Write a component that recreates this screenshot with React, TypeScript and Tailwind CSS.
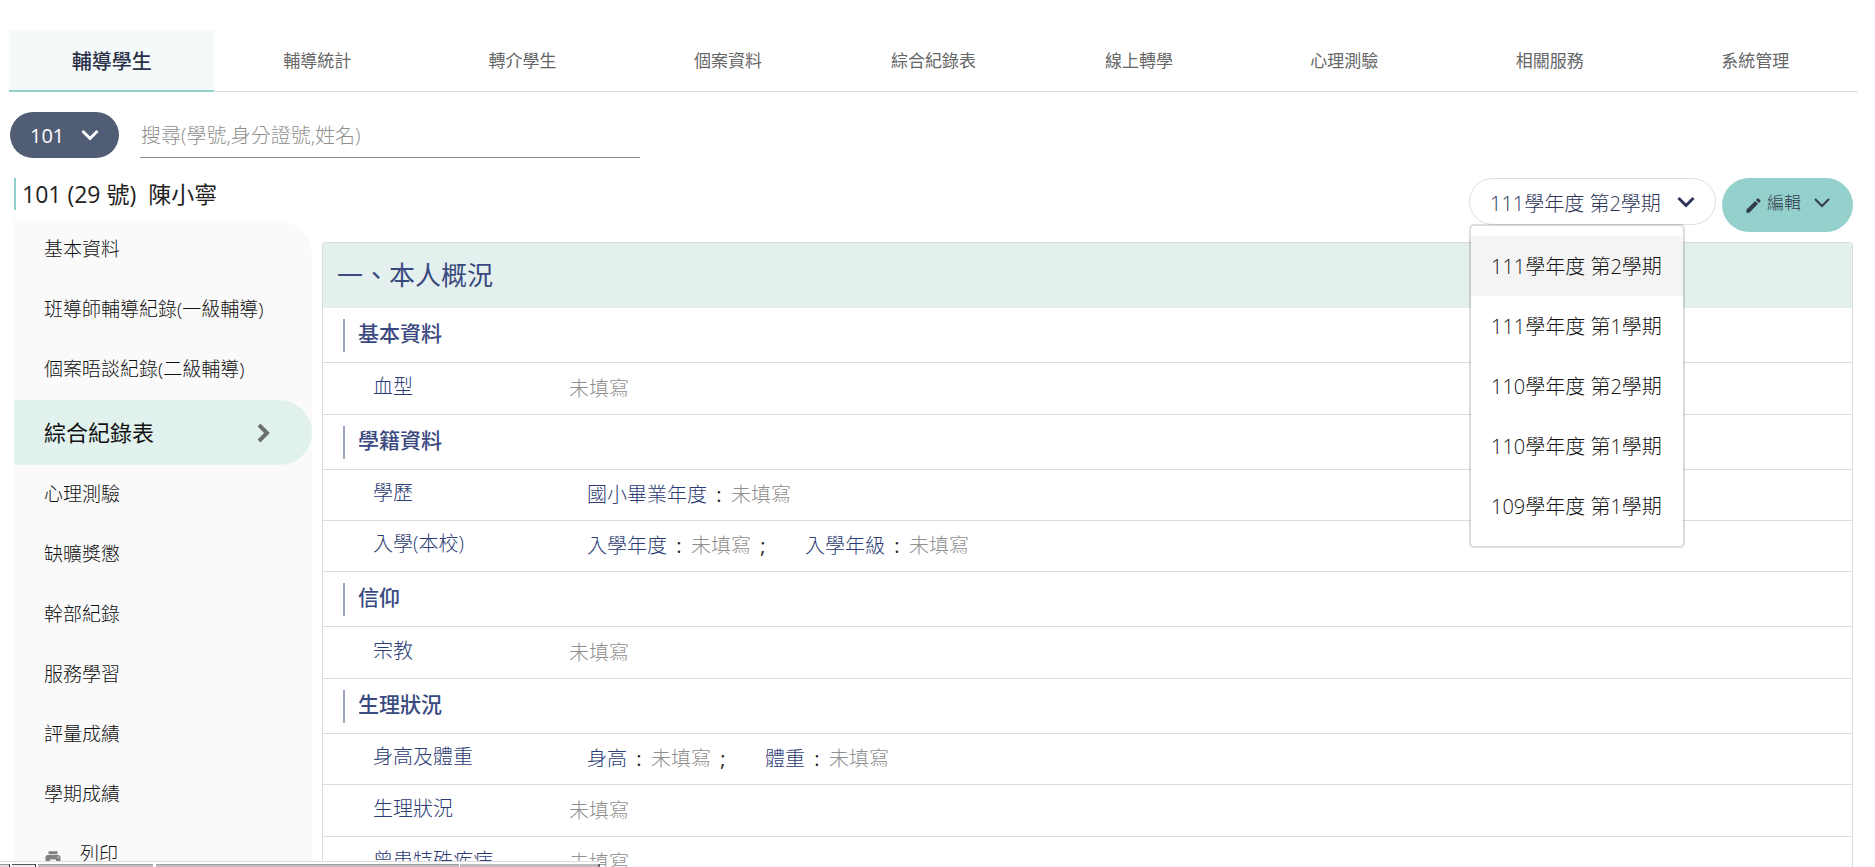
import React, { useState } from 'react';
import { MdEdit, MdPrint } from 'react-icons/md';

const TABS = ['輔導學生', '輔導統計', '轉介學生', '個案資料', '綜合紀錄表', '線上轉學', '心理測驗', '相關服務', '系統管理'];

const MENU = [
  '基本資料',
  '班導師輔導紀錄(一級輔導)',
  '個案晤談紀錄(二級輔導)',
  '綜合紀錄表',
  '心理測驗',
  '缺曠獎懲',
  '幹部紀錄',
  '服務學習',
  '評量成績',
  '學期成績',
];

const SEMESTERS = [
  '111學年度 第2學期',
  '111學年度 第1學期',
  '110學年度 第2學期',
  '110學年度 第1學期',
  '109學年度 第1學期',
];

type Row = { label: string; fields?: string[] };

const SECTIONS: { title: string; rows: Row[] }[] = [
  { title: '基本資料', rows: [{ label: '血型' }] },
  {
    title: '學籍資料',
    rows: [
      { label: '學歷', fields: ['國小畢業年度'] },
      { label: '入學(本校)', fields: ['入學年度', '入學年級'] },
    ],
  },
  { title: '信仰', rows: [{ label: '宗教' }] },
  {
    title: '生理狀況',
    rows: [
      { label: '身高及體重', fields: ['身高', '體重'] },
      { label: '生理狀況' },
      { label: '曾患特殊疾病' },
    ],
  },
];

function Chevron({ className = '' }: { className?: string }) {
  return (
    <svg viewBox="0 0 18 12" width="18" height="12" fill="none" stroke="currentColor" strokeWidth="3" className={className} aria-hidden="true">
      <path d="M1.5 2 9 9.5 16.5 2" />
    </svg>
  );
}

function Empty() {
  return <span className="text-[#8f8f8f]">未填寫</span>;
}

function DataRow({ row }: { row: Row }) {
  return (
    <div className={`flex items-center border-b border-[#dedede] pl-[50px] ${row.fields ? 'h-[51px]' : 'h-[52px]'}`}>
      <div className="w-[196px] shrink-0 pb-1 text-[#2c3c75]">{row.label}</div>
      {row.fields ? (
        <div className="flex pl-[18px]">
          {row.fields.map((field, i) => (
            <div key={field} className="flex">
              <span className="text-[#2c3c75]">{field}</span>
              <span className="w-6 text-center font-normal text-[#222]">:</span>
              <Empty />
              {i < row.fields!.length - 1 && <span className="mr-[30px] w-6 text-center font-normal text-[#222]">;</span>}
            </div>
          ))}
        </div>
      ) : (
        <Empty />
      )}
    </div>
  );
}

export default function App() {
  const [tab, setTab] = useState('輔導學生');
  const [item, setItem] = useState('綜合紀錄表');
  const [semester, setSemester] = useState(SEMESTERS[0]);
  const [open, setOpen] = useState(true);

  return (
    <div className="relative flex h-screen flex-col overflow-hidden bg-white pt-[30px] font-['Open_Sans','Noto_Sans_CJK_TC',sans-serif] text-xl font-light text-[#111]">
      <nav className="ml-[9px] mr-[17px] flex h-[62px] shrink-0 border-b border-[#dedede]">
        {TABS.map((t) => (
          <button
            key={t}
            onClick={() => setTab(t)}
            className={`-mb-px flex-1 ${
              t === tab ? 'border-b-2 border-[#8fd0c9] bg-[#f4fafa] pt-1 text-xl font-medium text-[#2b3048]' : 'pb-px text-[17px] font-normal text-[#666]'
            }`}
          >
            {t}
          </button>
        ))}
      </nav>

      <div className="ml-[10px] mt-5 flex h-[46px] shrink-0 items-stretch gap-[21px]">
        <div className="relative flex w-[109px] items-center rounded-full bg-[#515c75] text-white">
          <select aria-label="班級" className="h-full w-full appearance-none rounded-full bg-transparent pl-5 pt-0.5 font-normal">
            <option>101</option>
          </select>
          <Chevron className="pointer-events-none absolute right-5" />
        </div>
        <input
          type="text"
          aria-label="搜尋"
          placeholder="搜尋(學號,身分證號,姓名)"
          className="w-[500px] border-b border-[#8a8a8a] pl-px pt-0.5 outline-none placeholder:text-[#8f8f8f]"
        />
      </div>

      <main className="flex min-h-0 flex-1 gap-[10px] pl-[14px] pr-[22px] pt-5">
        <aside className="flex w-[298px] shrink-0 flex-col">
          <h1 className="mb-[10px] h-8 whitespace-pre border-l-2 border-[#8fd0c9] pl-[6px] text-[23px] font-normal leading-8 text-[#222]">
            {'101 (29 號)  陳小寧'}
          </h1>
          <div className="flex-1 rounded-tr-[36px] bg-[#fafafa]">
            {MENU.map((m) => (
              <button
                key={m}
                onClick={() => setItem(m)}
                className={`flex w-full items-center justify-between pl-[30px] text-left ${
                  m === item ? 'h-[65px] rounded-r-full bg-[#e1f2ee] pr-10 text-[22px] font-normal' : 'h-[60px] pb-0.5 text-[19px]'
                }`}
              >
                {m}
                {m === item && (
                  <svg viewBox="0 0 16 20" width="16" height="20" fill="none" stroke="#6b706f" strokeWidth="4" aria-hidden="true">
                    <path d="m3 2 8 8-8 8" />
                  </svg>
                )}
              </button>
            ))}
            <button className="flex h-[60px] w-full items-center gap-[18px] pb-0.5 pl-[30px] text-[19px]">
              <MdPrint className="mt-2 text-[#808080]" size={18} />
              列印
            </button>
          </div>
        </aside>

        <div className="flex min-w-0 flex-1 flex-col">
          <div className="flex h-[64px] shrink-0 items-start justify-end gap-[6px]">
            <div className="relative w-[247px] text-[#2c3458]">
              <div className="flex items-center">
                <select
                  aria-label="學期"
                  value={semester}
                  onChange={(e) => setSemester(e.target.value)}
                  className="h-[47px] w-full appearance-none rounded-full border border-[#dedede] bg-white pl-5 pt-1"
                >
                  {SEMESTERS.map((s) => (
                    <option key={s}>{s}</option>
                  ))}
                </select>
                <Chevron className="pointer-events-none absolute right-[21px]" />
              </div>
              {open && (
                <div className="absolute left-[2px] top-[48px] z-10 w-[212px] rounded-[3px] bg-white py-[10px] text-[#111] shadow-[0_0_1px_2px_rgba(0,0,0,0.14)]">
                  {SEMESTERS.map((s) => (
                    <button
                      key={s}
                      onClick={() => {
                        setSemester(s);
                        setOpen(false);
                      }}
                      className={`block h-[60px] w-full pl-5 pt-0.5 text-left ${s === semester ? 'bg-[#f4f4f4]' : ''}`}
                    >
                      {s}
                    </button>
                  ))}
                </div>
              )}
            </div>
            <button className="flex h-[54px] w-[131px] items-center rounded-full bg-[#95d1cc] pb-1 pl-[22px] text-[17px] text-[#333b4d]">
              <MdEdit className="mr-1 mt-1" size={19} />
              編輯
              <svg viewBox="0 0 16 10" width="16" height="10" fill="none" stroke="currentColor" strokeWidth="2" className="ml-[13px]" aria-hidden="true">
                <path d="m1 1 7 7 7-7" />
              </svg>
            </button>
          </div>

          <section className="flex-1 rounded-t-[3px] border border-[#d8dcdb]">
            <h2 className="flex h-[65px] items-center bg-[#e4f0ee] pl-[14px] text-[26px] font-normal text-[#3a4a80]">一、本人概況</h2>
            {SECTIONS.map((s) => (
              <div key={s.title}>
                <div className="flex h-[55px] items-center border-b border-[#dedede] pl-5">
                  <h3 className="border-l-2 border-[#9aa6c0] pb-1 pl-[13px] text-[21px] font-medium leading-[29px] text-[#3a4a80]">{s.title}</h3>
                </div>
                {s.rows.map((r) => (
                  <DataRow key={r.label} row={r} />
                ))}
              </div>
            ))}
          </section>
        </div>
      </main>

      {/* status strip along the bottom edge */}
      <div className="absolute bottom-0 left-0 flex h-[6px] w-[600px] border-t border-[#dedede] bg-white pt-[2px]">
        <div className="w-[10px] border-r border-t border-[#999] border-r-[#222] bg-[#ddd]" />
        <div className="mx-0.5 w-6 border-r border-t border-[#555] border-r-[#222] bg-[#eee]" />
        <div className="mr-[3px] flex-[115] border-t border-[#a0a0a0] bg-[#bdbdbd]" />
        <div className="mr-px flex-[302] border-t border-[#a0a0a0] bg-[#bdbdbd]" />
        <div className="flex-[138] border-r-2 border-[#666] bg-[#bdbdbd]" />
      </div>
    </div>
  );
}
